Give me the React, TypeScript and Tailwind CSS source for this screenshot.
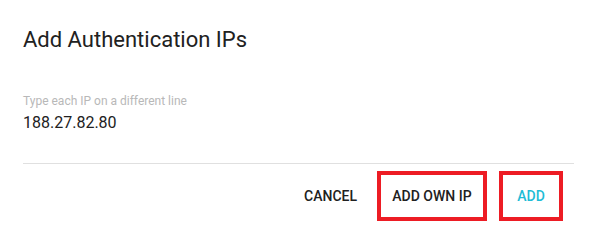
import React from "react";

export default function App() {
  return (
    <div
      className="w-[596px] h-[236px] bg-white flex flex-col pl-[23px] pr-[22px]"
      style={{ fontFamily: "Roboto, 'Liberation Sans', sans-serif" }}
    >
      <div className="pt-[26px] text-[22px] leading-[28px] text-[#212121]">
        Add Authentication IPs
      </div>
      <div className="mt-[39px] text-[12px] leading-[16px] text-[#b8b8b8]">
        Type each IP on a different line
      </div>
      <div className="mt-[4px] text-[16px] leading-[20px] text-[#212121]">
        188.27.82.80
      </div>
      <div className="mt-[30px] h-px bg-[#e0e0e0]" />
      <div className="mt-[7px] flex items-center justify-end pr-[11px] text-[14px] font-medium uppercase text-[#212121]">
        <span className="mr-[20px]">Cancel</span>
        <div className="w-[110px] h-[50px] border-4 border-[#ed1c24] flex items-center justify-center">
          Add own IP
        </div>
        <div className="ml-[12px] w-[64px] h-[50px] border-4 border-[#ed1c24] flex items-center justify-center text-[#1fbcd6]">
          Add
        </div>
      </div>
    </div>
  );
}
